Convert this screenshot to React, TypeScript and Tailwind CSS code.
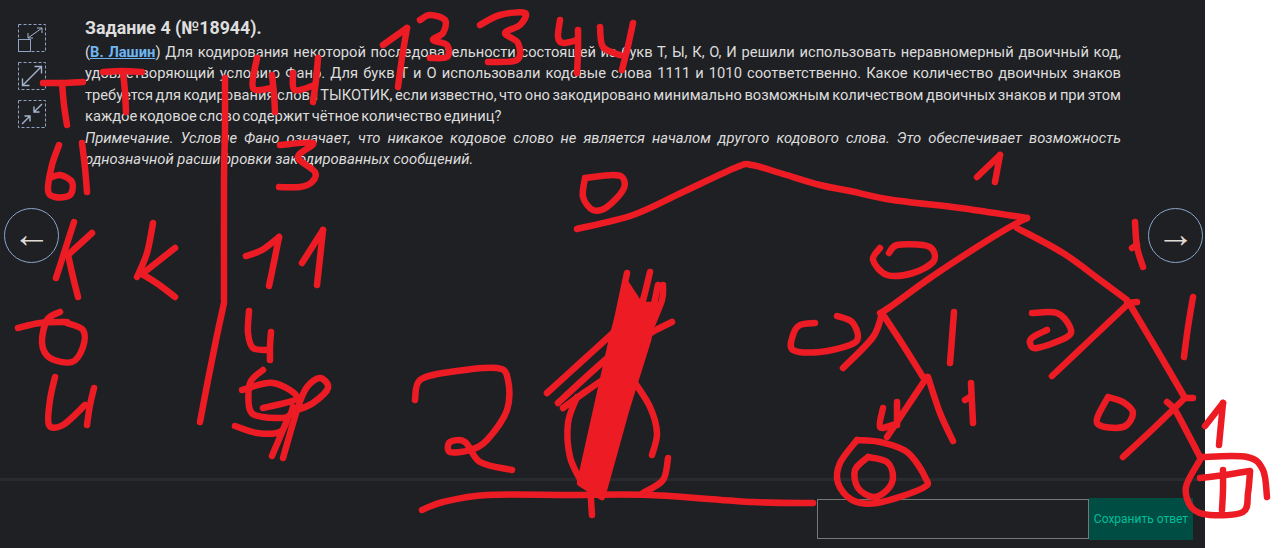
const strokes: number[][] = [
  // T
  [43,83,62,83,83,82],[62,83,64,105,67,125],
  [103,72,122,71,142,72],[123,72,125,92,126,112],
  // Ы
  [59,145,52,165,48,190,55,197,70,195,72,182,60,175,50,178],[82,143,85,168,87,192],
  // К К
  [74,222,65,250,56,278],[92,233,68,255],[68,255,73,277,78,297],
  [153,223,147,253,137,277],[175,248,142,274],[142,274,158,284,175,297],
  // divider
  [225,78,225,130,224,180,224,300],[224,303,216,340,208,380,200,422],
  // О
  [18,328,40,323,67,322],[60,312,47,320,42,343,50,358,72,362,83,347,83,330,67,323],
  // И
  [55,377,50,400,49,425,63,425,85,405],[94,388,90,405,87,425],
  // 11
  [246,256,262,250,279,237],[279,237,274,262,269,286],[302,263,323,230],[323,230,320,258,317,285],
  // 4
  [249,311,248,333,253,348,268,350],[271,332,270,346,270,360],
  // scribbled digit
  [263,370,250,383,250,410,263,417,287,417,293,407],[242,390,273,383,297,398,263,408],
  [297,410,313,403,328,388,320,378,307,387,298,407,283,458],[235,426,257,433,280,432,287,420,272,456],
  // 44
  [257,58,253,88,272,88],[272,75,274,94,275,112],
  [293,73,295,90,315,85],[318,58,316,80,313,102],
  // 13 3 44
  [383,45,407,28],[407,28,402,58,398,87],
  [420,20,430,15,445,20,443,33,433,40,447,45,447,57,430,58],
  [480,25,500,15,525,13,520,25,505,33,518,43,517,60,488,62],
  [560,20,558,37,563,43,577,40],[578,30,578,52,577,73],
  [600,27,603,47,620,55],[633,23,628,46,622,70],
  [280,145,313,143,298,157,315,172,312,182,300,187,279,187],
  // tree
  [577,229,633,215,683,192,737,167,752,165,780,173,820,185,850,191,893,200,960,208,1027,218],[1027,218,1008,228,977,247,930,278,890,307,880,313],
  [1017,228,1063,253,1100,280,1127,300],[1137,302,1127,303],[1129,303,1157,350,1185,398],[1185,398,1193,398],
  [1167,402,1175,410,1188,434,1200,457],[1185,398,1154,428,1123,457],
  [977,177,1000,155],[1000,155,995,182],
  [880,248,873,260,887,275,913,273,933,262,933,250,923,245,897,245,889,253],
  [1135,222,1137,247,1143,267],[1132,248,1137,245],
  [585,178,583,197,593,210,607,207,623,190,623,178,613,175,585,178],
  // 2
  [415,400,420,380,450,372,497,368,508,380,507,410,487,440,470,450,450,452,450,442,465,442,480,462,512,470],
  // baseline
  [422,510,443,502,487,495,570,495,650,495,753,502,813,503],
  // circle under the scribble
  [577,397,568,423,570,457,582,483],[633,380,650,407,657,433,652,455],[668,458,663,480,643,493],
  // scribble
  [547,393,580,363,613,333],[558,403,585,378,613,353],[563,408,585,392,607,377],[672,322,656,330,640,340],
  [590,483,591,500,592,515],
  [627,273,615,330,582,483],[650,272,640,310,620,360],[658,285,650,320,640,340],[663,285,662,300,652,325],
  [648,330,640,360,625,400],
  // lower tree, left
  [843,368,873,337,882,313],[882,313,903,345,923,377],[927,377,907,407,887,437],[928,377,940,413,953,441],
  [815,323,800,325,793,335,793,350,820,352,850,345,858,337,852,322,837,316],
  [954,312,952,338,950,363],[971,383,972,403,973,423],[965,400,970,397],
  [883,408,880,427,893,425],[897,402,897,414,897,425],
  [857,440,840,463,838,483,852,500,877,503,923,488,925,477,907,452,880,442,857,440],
  [868,457,855,470,858,488,873,497,887,490,893,477,887,462,868,457],
  // lower tree, right
  [1032,313,1057,313,1070,327,1067,337,1037,348,1030,343,1033,337,1047,330],
  [1052,376,1090,340,1127,305],[1193,297,1188,327,1184,357],
  [1108,397,1097,423,1123,427,1133,413,1123,402,1108,397],
  [1205,426,1223,403],[1223,403,1221,424,1219,445],
  [1200,457,1247,457,1263,470,1267,497],
  [1200,460,1186,487,1192,508,1210,515,1243,512,1248,493,1250,472],
  [1200,478,1225,475,1250,471],[1223,470,1223,490,1222,510],
];

const scribbleFill =
  "M627 285 L613 335 L580 483 L602 497 L627 407 L648 340 L655 305 L640 305 Z";

function toPath(p: number[]) {
  const n = p.length / 2;
  const x = (i: number) => p[2 * Math.max(0, Math.min(n - 1, i))];
  const y = (i: number) => p[2 * Math.max(0, Math.min(n - 1, i)) + 1];
  let d = `M${x(0)} ${y(0)}`;
  for (let i = 0; i < n - 1; i++) {
    const c1x = x(i) + (x(i + 1) - x(i - 1)) / 6;
    const c1y = y(i) + (y(i + 1) - y(i - 1)) / 6;
    const c2x = x(i + 1) - (x(i + 2) - x(i)) / 6;
    const c2y = y(i + 1) - (y(i + 2) - y(i)) / 6;
    d += ` C${c1x} ${c1y} ${c2x} ${c2y} ${x(i + 1)} ${y(i + 1)}`;
  }
  return d;
}

function Frame({ children }: { children: React.ReactNode }) {
  return (
    <svg width="28" height="28" viewBox="0 0 28 28" fill="none" stroke="#8fa3c4" strokeWidth="1">
      <rect x="0.5" y="0.5" width="27" height="27" strokeDasharray="3 2" />
      {children}
    </svg>
  );
}

function SideIcons() {
  return (
    <div className="flex flex-col gap-2.5 w-[28px] shrink-0 mt-[24px]">
      <Frame>
        <rect x="0.5" y="15.5" width="12" height="12" fill="#1f2023" stroke="#8fa3c4" />
        <path d="M10 14 L24 4 M19 4 H24 V9 M10 9 V14 H15" stroke="#a6b5cf" />
      </Frame>
      <Frame>
        <path d="M4.5 23.5 L23.5 4.5 M16.5 4.5 H23.5 V11.5 M4.5 16.5 V23.5 H11.5" stroke="#a6b5cf" strokeWidth="1.4" />
      </Frame>
      <Frame>
        <path d="M4 24 L12 16 M6.5 16 H12 V21.5 M24 4 L16 12 M16 6.5 V12 H21.5" stroke="#a6b5cf" strokeWidth="1.4" />
      </Frame>
    </div>
  );
}

function NavArrow({ side, glyph }: { side: string; glyph: string }) {
  return (
    <div
      className={`absolute top-[208px] w-[55px] h-[55px] rounded-full border border-[#8aa6cc] flex items-center justify-center text-[#e0dcd4] text-[38px] leading-none pb-[3px] font-['Liberation_Sans'] ${side}`}
    >
      {glyph}
    </div>
  );
}

export default function App() {
  return (
    <div className="relative w-[1281px] h-[548px] overflow-hidden bg-white" style={{ fontFamily: "Roboto, 'Noto Sans', sans-serif" }}>
      <div className="w-[1205px] h-full bg-[#1f2023] flex flex-col">
        <div className="flex-1 flex gap-[39px] pl-[18px]">
          <SideIcons />
          <div className="w-[1036px] pt-[18px]">
            <h2 className="text-[17.8px] leading-[20px] font-bold text-[#dedede] mb-[4px]">Задание 4 (№18944).</h2>
            <p className="text-[14.7px] leading-[21.4px] text-[#dcdcdc] text-justify [word-spacing:-1.5px]">
              (<a className="text-[#6db6f2] font-bold underline">В. Лашин</a>) Для кодирования некоторой последовательности состоящей из букв Т, Ы, К, О, И решили использовать неравномерный двоичный код, удовлетворяющий условию Фано. Для букв Т и О использовали кодовые слова 1111 и 1010 соответственно. Какое количество двоичных знаков требуется для кодирования слова ТЫКОТИК, если известно, что оно закодировано минимально возможным количеством двоичных знаков и при этом каждое кодовое слово содержит чётное количество единиц?
            </p>
            <p className="text-[14.8px] leading-[21.4px] text-[#dcdcdc] text-justify italic">
              Примечание. Условие Фано означает, что никакое кодовое слово не является началом другого кодового слова. Это обеспечивает возможность однозначной расшифровки закодированных сообщений.
            </p>
          </div>
        </div>
        <div className="h-[70px] shrink-0 border-t-[3px] border-[#2a2b2e] flex items-start justify-end pr-[12px] pt-[17px]">
          <input className="w-[272px] h-[40px] mt-px border border-[#777] bg-transparent" />
          <button className="w-[104px] h-[42px] bg-[#004d43] text-[#00bf9a] text-[12px]">Сохранить ответ</button>
        </div>
      </div>
      <NavArrow side="left-[4px]" glyph="←" />
      <NavArrow side="left-[1148px]" glyph="→" />
      <svg className="absolute inset-0 pointer-events-none" width="1281" height="548" fill="none" stroke="#ed1c24" strokeWidth="6.5" strokeLinecap="round" strokeLinejoin="round">
        <path d={scribbleFill} fill="#ed1c24" />
        {strokes.map((p, i) => (
          <path key={i} d={toPath(p)} />
        ))}
      </svg>
    </div>
  );
}
